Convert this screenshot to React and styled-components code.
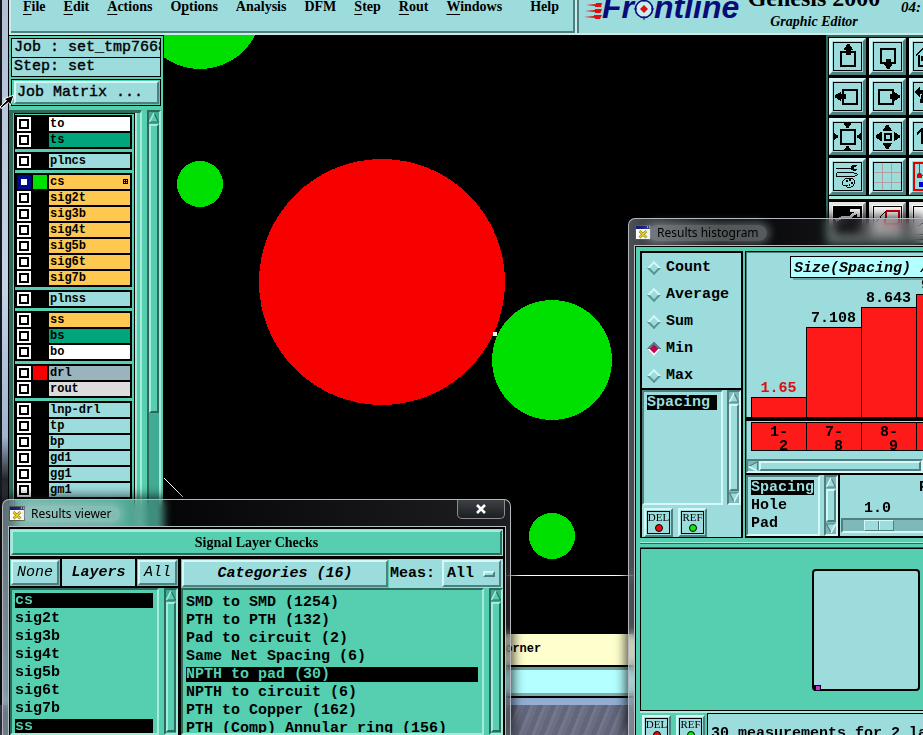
import React, { useState } from 'react';
import styled, { createGlobalStyle, css } from 'styled-components';

const MONO = '"Liberation Mono", monospace';
const SERIF = '"Liberation Serif", serif';

const teal = { base: '#55cfb0', hi: '#a4ecd9', lo: '#2d6a59', trough: '#43ab94' };
const cyan = { base: '#9cdcdc', hi: '#d4f7f7', lo: '#4f8080', trough: '#7fb8b8' };

const raised = css`
  border: 2px solid;
  border-color: ${p => p.$tone.hi} ${p => p.$tone.lo} ${p => p.$tone.lo} ${p => p.$tone.hi};
`;

const sunken = css`
  border: 2px solid;
  border-color: ${p => p.$tone.lo} ${p => p.$tone.hi} ${p => p.$tone.hi} ${p => p.$tone.lo};
`;

const GlobalStyle = createGlobalStyle`
  * { box-sizing: border-box; }
  body { margin: 0; overflow: hidden; background: #5c6278; color: #000; }
  button, input, select { margin: 0; padding: 0; border-radius: 0; color: inherit; }
  ul { margin: 0; padding: 0; list-style: none; }
  svg { display: block; }
`;

/* ---------- desktop and main window ---------- */

const Desktop = styled.div`
  position: relative;
  height: 100vh;
  overflow: hidden;
  background:
    repeating-linear-gradient(112deg, rgba(255, 255, 255, 0.06) 0 3px, transparent 3px 7px, rgba(0, 0, 0, 0.08) 7px 12px),
    linear-gradient(90deg, #4a5068, #6c7086 60%, #585e74);
`;

const Editor = styled.div`
  display: flex;
  flex-direction: column;
  height: calc(100vh - 30px);
  padding: 0 0 8px 8px;
  background:
    linear-gradient(90deg, #16181c 0 2px, transparent 2px),
    linear-gradient(180deg, #aebfd6 0, #c3d4ea 40%, #9fb4d0 62%, #22262c 68%, #93b0d4 100%);
`;

const Header = styled.header`
  display: flex;
  height: 35px;
  flex: none;
  gap: 2px;
  overflow: hidden;
  padding: 0 0 1px 2px;
  background: #cdeaea;
  border-left: 1px solid #000;
  font-family: ${SERIF};
`;

const MenuBar = styled.nav`
  display: flex;
  flex: 1;
  gap: 18px;
  height: 33px;
  padding: 0 14px 0 12px;
  background: ${cyan.base};
  border: solid ${cyan.lo};
  border-width: 0 2px 2px 0;
`;

const MenuItem = styled.button`
  height: 14px;
  border: 0;
  background: none;
  font: bold 14px/14px ${SERIF};
  ${p => p.$last && 'margin-left: auto;'}

  u {
    text-underline-offset: 3px;
    text-decoration-thickness: 1px;
    text-decoration-skip-ink: none;
  }
`;

const Brand = styled.div`
  display: flex;
  align-items: flex-end;
  width: 346px;
  height: 33px;
  padding: 0 0 0 3px;
  background: ${cyan.base};
  border-left: 2px solid ${cyan.lo};
`;

const Wordmark = styled.div`
  display: flex;
  align-items: flex-end;
  width: 165px;
  height: 33px;
  padding-bottom: 10px;
  color: #0a0a7a;
  font: italic bold 32px/32px "Liberation Sans", sans-serif;

  svg { flex: none; }
`;

const Product = styled.div`
  display: flex;
  flex-direction: column;
  align-items: center;
  gap: 4px;
  width: 134px;
  padding-bottom: 3px;
  white-space: nowrap;
`;

const ProductName = styled.strong`
  font: bold 24px/24px ${SERIF};
`;

const ProductMode = styled.em`
  font: italic bold 14px/16px ${SERIF};
`;

const Clock = styled.time`
  padding: 0 0 18px 20px;
  font: italic bold 15px/16px ${SERIF};
`;

const Body = styled.div`
  display: flex;
  flex: 1;
  min-height: 0;
  border-left: 1px solid #000;
  background: #000;
`;

const Work = styled.main`
  display: flex;
  flex: 1;
  flex-direction: column;
  min-width: 0;
`;

const Canvas = styled.svg`
  flex: 1;
  width: 100%;
  min-height: 0;
  background: #000;
  shape-rendering: crispEdges;
`;

const Hint = styled.div`
  height: 31px;
  flex: none;
  padding-left: 334px;
  background: #ffffcd;
  font: bold 12px/30px ${MONO};
  white-space: nowrap;
`;

const CommandLine = styled.input`
  height: 29px;
  flex: none;
  background: #b4ffff;
  border: solid;
  border-width: 3px 0;
  border-color: #6c9c92 transparent #78b0ac;
  outline: 2px solid #000;
  outline-offset: 0;
  margin: 2px 0 1px;
`;

/* ---------- layer sidebar ---------- */

const Sidebar = styled.aside`
  display: flex;
  flex-direction: column;
  width: 155px;
  flex: none;
  padding: 2px 2px 0 2px;
  background: ${teal.base};
  border: solid #000;
  border-width: 1px 1px 0 0;
`;

const Info = styled.div`
  height: 20px;
  padding-left: 2px;
  margin-bottom: -1px;
  overflow: hidden;
  flex: none;
  background: ${cyan.base};
  border: 1px solid #000;
  font: 15px/18px ${MONO};
  -webkit-text-stroke: 0.4px #000;
  white-space: pre;
`;

const MatrixFrame = styled.div`
  flex: none;
  height: 27px;
  margin: 3px 0 4px;
  padding: 1px 1px 1px 2px;
  border: 1px solid #000;
`;

const MatrixButton = styled.button`
  ${raised}
  width: 100%;
  height: 23px;
  padding-left: 1px;
  background: ${cyan.base};
  font: 15px/17px ${MONO};
  -webkit-text-stroke: 0.4px #000;
  text-align: left;
`;

const LayerArea = styled.div`
  display: flex;
  flex: 1;
  gap: 5px;
  min-height: 0;
  margin-left: -2px;
`;

const LayerFrame = styled.div`
  flex: 1;
  padding: 0 1px;
  overflow: hidden;
  border: solid ${teal.lo};
  border-width: 3px 0 0 4px;
  border-right: 2px solid ${teal.hi};
  margin-right: 0;
`;

const LayerList = styled.div`
  display: flex;
  flex-direction: column;
  gap: 3px;
  height: 100%;
  margin-right: 4px;
  padding: 1px 2px 0 0;
  border: 1px solid #000;
  border-width: 1px 1px 0 1px;
  box-shadow: 2px 0 0 ${teal.hi};
`;

const LayerGroup = styled.div`
  flex: none;
  padding: 1px 2px;
  background: #000;
`;

const LayerRow = styled.label`
  display: grid;
  grid-template-columns: 14px 14px 1fr;
  gap: 2px;
  height: 16px;
  padding: 1px 0;
`;

const LayerCheck = styled.input`
  appearance: none;
  width: 14px;
  height: 14px;
  border: 2px solid #fff;
  background: #fff;
  box-shadow: inset 0 0 0 2px #000;

  &:checked {
    border-color: #000b8c;
    box-shadow: inset 0 0 0 2px #000b8c;
  }
`;

const Swatch = styled.span`
  background: ${p => p.$color || '#000'};
`;

const LayerName = styled.span`
  display: flex;
  align-items: center;
  justify-content: space-between;
  padding-left: 1px;
  background: ${p => p.$color};
  font: bold 12px/14px ${MONO};
`;

/* ---------- tool buttons ---------- */

const Tools = styled.div`
  width: 97px;
  flex: none;
  overflow: hidden;
  padding-left: 1px;
  background: #000;
  border-left: 2px solid ${teal.lo};
  border-top: 2px solid ${teal.lo};
`;

const ToolGrid = styled.div`
  display: grid;
  grid-template-columns: repeat(3, 37px);
  gap: 3px;
  width: 120px;
  padding: 1px 0;
  margin-bottom: 2px;
  border-bottom: 3px solid ${teal.hi};
`;

const ToolButton = styled.button`
  width: 37px;
  height: 37px;
  padding: 1px;
  background: ${p => p.$tone.base};
  border: 3px solid;
  border-color: ${p => p.$tone.hi} ${p => p.$tone.lo} ${p => p.$tone.lo} ${p => p.$tone.hi};

  svg { border: ${p => (p.$frame ? 2 : 1)}px solid ${p => p.$frame || '#000'}; }
`;

/* ---------- scroll bars ---------- */

const Bar = styled.div`
  ${sunken}
  display: flex;
  flex: none;
  flex-direction: ${p => (p.$across ? 'row' : 'column')};
  ${p => (p.$across ? 'height: 14px;' : 'width: 14px;')}
  background: ${p => p.$tone.trough};
`;

const Thumb = styled.div`
  ${raised}
  flex: 1;
  background: ${p => p.$tone.base};
  margin: ${p => (p.$across ? '0 0 0 1px' : '1px 0')};
  ${p => p.$length && `flex: 0 0 ${p.$length}px;`}
`;

function Arrow({ tone, turn = 0 }) {
  return (
    <svg width="10" height="11" viewBox="0 0 10 11">
      <g transform={`rotate(${turn} 5 5.5)`}>
        <path d="M5 1 L9.5 10 H0.5 Z" fill={tone.base} />
        <path d="M5 1 L9.5 10 H0.5" stroke={tone.lo} strokeWidth="1.2" fill="none" />
        <path d="M5 1 L0.5 10" stroke={tone.hi} strokeWidth="1.6" fill="none" />
      </g>
    </svg>
  );
}

function ScrollBar({ tone, length, end, across }) {
  return (
    <Bar $tone={tone} $across={across}>
      <Arrow tone={tone} turn={across ? -90 : 0} />
      <Thumb $tone={tone} $length={length} $across={across} />
      {end && <Arrow tone={tone} turn={180} />}
    </Bar>
  );
}

/* ---------- glass windows ---------- */

const Glass = styled.section`
  position: absolute;
  display: flex;
  flex-direction: column;
  left: ${p => p.$left}px;
  top: ${p => p.$top}px;
  bottom: 0;
  ${p => (p.$width ? `width: ${p.$width}px;` : 'right: 0;')}
  padding: 0 5px;
  border: 1px solid #b4b8bc;
  border-width: 1px 1px 0;
  border-radius: 7px 7px 0 0;
  ${p => !p.$width && 'border-right: 0; padding-right: 0; border-top-right-radius: 0;'}
  background: linear-gradient(90deg, rgba(150, 160, 170, 0.5), rgba(20, 24, 30, 0.2) 30%, rgba(60, 60, 64, 0.5));
  backdrop-filter: blur(5px);
  box-shadow: 0 0 12px 2px rgba(0, 0, 0, 0.75);
`;

const TitleBar = styled.div`
  display: flex;
  align-items: center;
  gap: 6px;
  height: 27px;
  flex: none;
  padding-left: 1px;
  font: 12px/16px "Noto Sans", sans-serif;
`;

const Title = styled.h2`
  margin: 0 0 0 -8px;
  padding: 0 8px;
  border-radius: 8px;
  background: rgba(200, 210, 214, 0.4);
  box-shadow: 0 0 8px 3px rgba(200, 210, 214, 0.4);
  font: inherit;
`;

const CloseButton = styled.button`
  align-self: flex-start;
  width: 48px;
  height: 19px;
  margin-left: auto;
  border: 1px solid #8b8e90;
  border-top: 0;
  border-radius: 0 0 5px 5px;
  background: linear-gradient(#3c4044, #1c1f22);

  svg { margin: 0 auto; }
`;

const Client = styled.div`
  display: flex;
  flex: 1;
  flex-direction: column;
  min-height: 0;
  overflow: hidden;
  margin-left: ${p => (p.$pad ? 1 : 1)}px;
  padding: ${p => (p.$pad ? '4px 0 0 4px' : '1px 1px 0 0')};
  background: ${p => p.$bg};
  border: solid #000;
  border-width: 1px ${p => (p.$pad ? 0 : 1)}px 0 1px;
  outline: 1px solid #b4c0c4;
`;

/* ---------- results viewer ---------- */

const Banner = styled.div`
  height: 27px;
  flex: none;
  margin-bottom: 3px;
  border: 1px solid ${cyan.base};
  background: ${teal.base};
`;

const BannerTitle = styled.h3`
  ${raised}
  height: 25px;
  margin: 0;
  font: bold 14px/22px ${SERIF};
  text-align: center;
`;

const Columns = styled.div`
  display: flex;
  flex: 1;
  gap: 3px;
  min-height: 0;
`;

const Column = styled.div`
  display: flex;
  flex-direction: column;
  ${p => (p.$width ? `width: ${p.$width}px; flex: none;` : 'flex: 1; min-width: 0;')}
`;

const ColumnHead = styled.div`
  display: flex;
  gap: ${p => p.$gap || 0}px;
  height: 29px;
  flex: none;
  padding-bottom: ${p => (p.$gap ? 2 : 0)}px;
`;

const PushCell = styled.div`
  flex: ${p => (p.$grow ? '1' : 'none')};
  padding: 1px;
  background: ${teal.base};
`;

const Push = styled.button`
  ${raised}
  width: 100%;
  height: 100%;
  padding: 0 4px;
  background: ${cyan.base};
  font: italic ${p => (p.$bold ? 'bold' : 'normal')} 15px/17px ${MONO};
`;

const HeadLabel = styled.div`
  flex: 1;
  background: ${cyan.base};
  font: italic bold 15px/28px ${MONO};
  text-align: center;
`;

const Measure = styled.label`
  display: flex;
  align-items: center;
  gap: 7px;
  width: 114px;
  padding: 0 2px 0 1px;
  background: ${cyan.base};
  font: bold 15px/17px ${MONO};
`;

const OptionWrap = styled.span`
  ${raised}
  display: flex;
  align-items: center;
  flex: 1;
  height: 27px;
  padding-right: 4px;
`;

const OptionMenu = styled.select`
  appearance: none;
  flex: 1;
  min-width: 0;
  border: 0;
  padding-left: 3px;
  background: none;
  font: inherit;
`;

const OptionMark = styled.i`
  ${raised}
  width: 12px;
  height: 6px;
`;

const ListRow = styled.div`
  display: flex;
  flex: 1;
  gap: ${p => (p.$tight ? 4 : 5)}px;
  min-height: 0;
  background: ${p => p.$tone.base};
`;

const ListBox = styled.ul`
  ${sunken}
  flex: 1;
  overflow: hidden;
  padding: ${p => (p.$low ? 5 : 3)}px 4px 0 3px;
`;

const ListItem = styled.li`
  height: 15px;
  margin-bottom: 3px;
  font: bold 15px/15px ${MONO};
  white-space: nowrap;
  ${p => p.$on && css`
    background: #000;
    color: ${p.$tone.base};
  `}
`;

/* ---------- results histogram ---------- */

const Upper = styled.div`
  display: flex;
  flex: none;
  height: 287px;
  gap: 2px;
`;

const SidePanel = styled.div`
  display: flex;
  flex-direction: column;
  width: 103px;
  flex: none;
  border: 2px solid #000;
  border-bottom-width: 1px;
  background: ${cyan.base};
`;

const RadioSet = styled.fieldset`
  height: 137px;
  flex: none;
  margin: 0;
  padding: 1px 0 0 4px;
  border: 0;
  border-bottom: 2px solid #000;
`;

const RadioRow = styled.label`
  display: flex;
  align-items: center;
  gap: 4px;
  height: 27px;
  font: bold 15px/17px ${MONO};
`;

const Diamond = styled.input`
  appearance: none;
  width: 10px;
  height: 10px;
  margin: 3px;
  transform: rotate(45deg);
  border: 2px solid;
  border-color: ${cyan.hi} #5a9292 #5a9292 ${cyan.hi};

  &:checked {
    background: #c4004c;
    border-color: ${cyan.lo} #f2ffff #f2ffff ${cyan.lo};
  }
`;

const SideList = styled.div`
  display: flex;
  height: 115px;
  flex: none;
`;

const Chips = styled.div`
  display: flex;
  gap: ${p => p.$gap}px;
  padding: ${p => p.$pad};
`;

const Chip = styled.button`
  ${raised}
  flex: none;
  width: 29px;
  height: 29px;
  background: ${cyan.base};
  padding: 1px;

  span {
    display: flex;
    flex-direction: column;
    align-items: center;
    gap: 1px;
    height: 23px;
    border: 1px solid #000;
    font: 11px/11px ${SERIF};
  }

  i {
    width: 8px;
    height: 8px;
    border: 1px solid #000;
    border-radius: 50%;
    background: ${p => p.$dot};
  }
`;

const ChartPanel = styled.div`
  position: relative;
  display: flex;
  flex: 1;
  flex-direction: column;
  min-width: 0;
  overflow: hidden;
  background: ${cyan.base};
  border: solid #000;
  border-width: 1px 0 2px 1px;
  box-shadow: inset 1px 1px 0 ${cyan.lo};
`;

const ChartTitle = styled.h3`
  position: absolute;
  top: 4px;
  left: 44px;
  margin: 0;
  height: 22px;
  padding: 0 3px;
  background: #b4ffff;
  border: 1px solid #000;
  box-shadow: 3px 2px 0 #6fa2a2;
  font: italic bold 15px/24px ${MONO};
  white-space: nowrap;
`;

const Bars = styled.div`
  display: flex;
  align-items: flex-end;
  height: 165px;
  flex: none;
  padding-left: 5px;
`;

const BarColumn = styled.div`
  width: 55px;
  flex: none;
  color: ${p => p.$ink};
  font: bold 15px/17px ${MONO};
  text-align: center;
`;

const BarFill = styled.div`
  width: 56px;
  border: 1px solid #000;
  border-bottom: 0;
  background: #ff1a1a;
`;

const Bins = styled.div`
  display: flex;
  flex: none;
  height: 42px;
  border-top: 4px solid #000;
  padding: 1px 0 8px 5px;
`;

const Bin = styled.div`
  width: 56px;
  flex: none;
  height: 29px;
  margin-right: -1px;
  overflow: hidden;
  padding-top: 3px;
  border: 1px solid #000;
  background: #ff1a1a;
  font: bold 15px/14px ${MONO};
  text-align: center;
  white-space: pre;
`;

const ControlRow = styled.div`
  display: flex;
  flex: 1;
  min-height: 0;
  border-top: 2px solid #000;
`;

const FilterList = styled.div`
  display: flex;
  width: 92px;
  flex: none;
`;

const ScalePanel = styled.div`
  display: flex;
  flex-direction: column;
  flex: none;
  width: 246px;
  padding: 4px 2px 0 1px;
  border-left: 2px solid #000;
  font: bold 15px/17px ${MONO};
`;

const ScaleLabel = styled.label`
  padding-left: 78px;
  height: 21px;
`;

const ScaleValue = styled.output`
  padding-left: 23px;
  height: 18px;
`;

const Scale = styled.input`
  appearance: none;
  width: 240px;
  height: 15px;
  border: 2px solid;
  border-color: ${cyan.lo} ${cyan.hi} ${cyan.hi} ${cyan.lo};
  background: ${cyan.trough};

  &::-webkit-slider-thumb {
    appearance: none;
    width: 30px;
    height: 11px;
    border: 1px solid;
    border-color: ${cyan.hi} ${cyan.lo} ${cyan.lo} ${cyan.hi};
    background: linear-gradient(90deg, transparent 13px, ${cyan.lo} 13px 14px, ${cyan.hi} 14px 15px, transparent 15px) ${cyan.base};
  }
`;

const Sash = styled.div`
  height: 10px;
  flex: none;
  border-bottom: 1px solid ${teal.lo};
  background: linear-gradient(transparent 4px, ${teal.hi} 4px 5px, ${teal.lo} 5px 6px, transparent 6px);
`;

const BoardPanel = styled.div`
  display: flex;
  justify-content: flex-end;
  align-items: flex-start;
  flex: 1;
  min-height: 0;
  padding: 20px 3px 0 0;
  border: 1px solid #000;
  border-right: 0;
`;

const Footer = styled.div`
  display: flex;
  gap: 2px;
  height: 24px;
  flex: none;
  overflow: hidden;
  border-top: 2px solid ${teal.hi};
`;

const Message = styled.p`
  flex: 1;
  height: 40px;
  margin: 0;
  padding: 10px 0 0 3px;
  overflow: hidden;
  background: ${cyan.base};
  border: solid #000;
  border-width: 1px 0 0 1px;
  font: bold 15px/20px ${MONO};
  white-space: nowrap;
`;

const Pointer = styled.svg`
  position: absolute;
  left: 0;
  top: 94px;
`;

/* ---------- data ---------- */

const MENUS = [
  ['', 'F', 'ile'], ['', 'E', 'dit'], ['', 'A', 'ctions'], ['O', 'p', 'tions'], ['Analysis', '', ''],
  ['DFM', '', ''], ['', 'S', 'tep'], ['', 'R', 'out'], ['', 'W', 'indows'], ['Help', '', ''],
];

const SIGNAL = '#ffc850';
const MASK = '#00a57c';

const LAYERS = [
  [['to', '#fff'], ['ts', MASK]],
  [['plncs', cyan.base]],
  [['cs', SIGNAL, '#00e000'], ['sig2t', SIGNAL], ['sig3b', SIGNAL], ['sig4t', SIGNAL], ['sig5b', SIGNAL], ['sig6t', SIGNAL], ['sig7b', SIGNAL]],
  [['plnss', cyan.base]],
  [['ss', SIGNAL], ['bs', MASK], ['bo', '#fff']],
  [['drl', '#9ab4be', '#f80000'], ['rout', '#dcdcdc']],
  [['lnp-drl', cyan.base], ['tp', cyan.base], ['bp', cyan.base], ['gd1', cyan.base], ['gg1', cyan.base], ['gm1', cyan.base]],
];

const CHECK_LAYERS = ['cs', 'sig2t', 'sig3b', 'sig4t', 'sig5b', 'sig6t', 'sig7b', 'ss'];

const CATEGORIES = [
  'SMD to SMD (1254)', 'PTH to PTH (132)', 'Pad to circuit (2)', 'Same Net Spacing (6)',
  'NPTH to pad (30)', 'NPTH to circuit (6)', 'PTH to Copper (162)', 'PTH (Comp) Annular ring (156)',
];

const BARS = [
  { value: '1.65', height: 20, bin: '1-\n 2', ink: '#d81010' },
  { value: '7.108', height: 90, bin: '7-\n 8' },
  { value: '8.643', height: 110, bin: '8-\n 9' },
  { value: '9.252', height: 123, bin: '9-\n 10' },
];

/* ---------- icons ---------- */

const HEAD = {
  up: 'M-5 3 L-1 -3 H1 L5 3 Z',
  down: 'M-5 -3 L-1 3 H1 L5 -3 Z',
  left: 'M3 -5 L-3 -1 V1 L3 5 Z',
  right: 'M-3 -5 L3 -1 V1 L-3 5 Z',
};

const Head = ({ dir, x, y }) => <path d={HEAD[dir]} transform={`translate(${x} ${y})`} />;
const Box = ({ x, y, s }) => <rect x={x} y={y} width={s} height={s} fill="none" stroke="#000" strokeWidth="2" />;

const TOOLS = [
  ['Pan up', <><Box x={7} y={9} s={15} /><Head dir="up" x={15} y={4} /><rect x="12" y="6" width="6" height="6" /></>],
  ['Pan down', <><Box x={7} y={6} s={15} /><rect x="12" y="17" width="6" height="6" /><Head dir="down" x={15} y={24} /></>],
  ['Home view', <path d="M2 13 L10 5 L20 5 L25 13 M5 12 V24 H22 V12 M8 14 H12 V18 H8 Z M15 24 V16 H19 V24" fill="none" stroke="#000" strokeWidth="2" />],
  ['Pan left', <><Box x={9} y={7} s={15} /><Head dir="left" x={4} y={14} /><rect x="6" y="11" width="6" height="6" /></>],
  ['Pan right', <><Box x={5} y={7} s={15} /><rect x="17" y="11" width="6" height="6" /><Head dir="right" x={24} y={14} /></>],
  ['Previous view', <path d="M1 9 L6 4 V8 H20 V11 H6 V14 Z M8 11 L11 14 V20 H6" fill="#000" stroke="#000" />],
  ['Zoom in', <><Box x={7} y={7} s={15} /><Head dir="down" x={14} y={2} /><Head dir="up" x={14} y={27} /><Head dir="right" x={1} y={14} /><Head dir="left" x={27} y={14} /></>],
  ['Zoom out', <><Box x={11} y={11} s={7} /><Head dir="up" x={14} y={5} /><Head dir="down" x={14} y={24} /><Head dir="left" x={5} y={14} /><Head dir="right" x={24} y={14} /></>],
  ['Zoom area', <path d="M3 12 L8 6 L13 12 M8 7 V22" fill="none" stroke="#000" strokeWidth="2" />],
  ['Setup', (
    <>
      <path d="M2 5 H17 C18 2 21 1 25 3 L21 4 V6 L25 7 C21 9 18 8 17 6 H2 Z" />
      <path d="M3 10 H20 L25 12 L20 14 H3 Z" fill="none" stroke="#000" />
      <path d="M9 21 C8 17 13 15 18 16 C23 17 22 23 18 25 C14 27 12 25 14 23 C11 25 9 23 9 21 Z" fill="none" stroke="#000" />
      <path d="M12 19 h2 M16 18 h2 M18 21 h2 M16 23 h1" stroke="#000" strokeWidth="2" />
    </>
  )],
  ['Grid', <path d="M9 0 V28 M18 0 V28 M0 10 H28 M0 20 H28" fill="none" stroke="#b49c9c" />],
  ['Snap', (
    <>
      <path d="M5 0 V13 H28" fill="none" stroke="#e00000" />
      <circle cx="5" cy="13" r="3" fill="#e00000" />
      <circle cx="7" cy="23" r="3" fill="#0000e0" />
    </>
  ), '#e00000'],
];

const WHITE = { base: '#ffffff', hi: '#e8e8e8', lo: '#8c8c8c' };

const EDIT_TOOLS = [
  ['Select feature', <><rect width="28" height="28" /><path d="M2 14 L8 11 H16 L25 4 M17 4 H25 V10" fill="none" stroke="#fff" strokeWidth="3" /></>],
  ['Select polygon', <><path d="M13 4 H26 V18 H11 Z" fill="none" stroke="#d00010" strokeWidth="2" /><path d="M2 16 L12 4" stroke="#000" /></>],
  ['Select net', <path d="M4 20 L24 6" stroke="#000" />],
];

function ToolIcon({ name, art, tone, frame }) {
  return (
    <ToolButton type="button" $tone={tone} $frame={frame} aria-label={name}>
      <svg width="29" height="29" viewBox="0 0 28 28" shapeRendering="crispEdges">{art}</svg>
    </ToolButton>
  );
}

const XIcon = () => (
  <svg width="16" height="15" viewBox="0 0 16 15">
    <rect x="0.5" y="0.5" width="15" height="14" fill="#fff" stroke="#555" />
    <rect x="1" y="1" width="14" height="3" fill="#151d78" />
    <path d="M12 2 h1 M14 2 h1" stroke="#fff" />
    <path d="M4.5 6 L11.5 12.5 M11.5 6 L4.5 12.5" stroke="#807000" strokeWidth="2.6" />
    <path d="M4.5 6 L11.5 12.5 M11.5 6 L4.5 12.5" stroke="#e8d420" strokeWidth="1.6" />
  </svg>
);

function FrontlineLogo() {
  return (
    <Wordmark>
      <svg width="20" height="20" viewBox="0 0 20 20">
        {[0, 6, 12].map(y => (
          <path
            key={y}
            fill="#e01010"
            d={`M${4 - y / 6} ${y + 2} L${14 - y / 6} ${y + 1} V${y} H20 L${19 - y / 12} ${y + 4} H13 V${y + 3} Z`}
          />
        ))}
      </svg>
      Fr
      <svg width="20" height="26" viewBox="0 0 20 26">
        <circle cx="10" cy="12" r="8.5" fill="#c8eef0" stroke="#0a0a7a" strokeWidth="1.6" />
        <path d="M10 1 V5 M10 19 V23 M0 12 H3 M17 12 H20" stroke="#0a0a7a" />
        <path d="M10 8 L14 12 L10 16 L6 12 Z" fill="#e01010" />
      </svg>
      ntline
    </Wordmark>
  );
}

/* ---------- parts ---------- */

function LayerPanel() {
  return (
    <Sidebar>
      <Info>Job : set_tmp7668</Info>
      <Info>Step: set</Info>
      <MatrixFrame>
        <MatrixButton type="button" $tone={cyan}>Job Matrix ...</MatrixButton>
      </MatrixFrame>
      <LayerArea>
        <LayerFrame>
          <LayerList>
            {LAYERS.map(group => (
              <LayerGroup key={group[0][0]}>
                {group.map(([name, color, swatch]) => (
                  <LayerRow key={name}>
                    <LayerCheck type="checkbox" defaultChecked={name === 'cs'} />
                    <Swatch $color={swatch} />
                    <LayerName $color={color}>
                      {name}
                      {name === 'cs' && (
                        <svg width="7" height="6" viewBox="0 0 7 6" shapeRendering="crispEdges">
                          <path d="M0 0.5 H5 M0 2.5 H5 M0 4.5 H5 M0.5 0 V5 M2.5 0 V5 M4.5 0 V5" stroke="#000" />
                        </svg>
                      )}
                    </LayerName>
                  </LayerRow>
                ))}
              </LayerGroup>
            ))}
          </LayerList>
        </LayerFrame>
        <ScrollBar tone={teal} length={289} />
      </LayerArea>
    </Sidebar>
  );
}

function SelectList({ items, initial, tone, low }) {
  const [picked, setPicked] = useState(initial);

  return (
    <ListBox $tone={tone} $low={low} role="listbox">
      {items.map(item => (
        <ListItem
          key={item}
          role="option"
          aria-selected={picked.includes(item)}
          $on={picked.includes(item)}
          $tone={tone}
          onClick={() => setPicked([item])}
        >
          {item}
        </ListItem>
      ))}
    </ListBox>
  );
}

function ResultsViewer() {
  return (
    <Glass $left={2} $top={499} $width={509}>
      <TitleBar>
        <XIcon />
        <Title>Results viewer</Title>
        <CloseButton type="button" aria-label="Close">
          <svg width="12" height="10" viewBox="0 0 12 10">
            <path d="M2 1 L10 9 M10 1 L2 9" stroke="#fff" strokeWidth="2.6" />
          </svg>
        </CloseButton>
      </TitleBar>
      <Client $bg="#000">
        <Banner><BannerTitle $tone={teal}>Signal Layer Checks</BannerTitle></Banner>
        <Columns>
          <Column $width={168}>
            <ColumnHead $gap={2}>
              <PushCell><Push type="button" $tone={cyan}>None</Push></PushCell>
              <HeadLabel>Layers</HeadLabel>
              <PushCell><Push type="button" $tone={cyan}>All</Push></PushCell>
            </ColumnHead>
            <ListRow $tone={teal}>
              <SelectList items={CHECK_LAYERS} initial={['cs', 'ss']} tone={teal} />
              <ScrollBar tone={teal} />
            </ListRow>
          </Column>
          <Column>
            <ColumnHead>
              <PushCell $grow><Push type="button" $tone={cyan} $bold>Categories (16)</Push></PushCell>
              <Measure>
                Meas:
                <OptionWrap $tone={cyan}>
                  <OptionMenu defaultValue="All"><option>All</option></OptionMenu>
                  <OptionMark $tone={cyan} />
                </OptionWrap>
              </Measure>
            </ColumnHead>
            <ListRow $tone={teal}>
              <SelectList items={CATEGORIES} initial={['NPTH to pad (30)']} tone={teal} low />
              <ScrollBar tone={teal} />
            </ListRow>
          </Column>
        </Columns>
      </Client>
    </Glass>
  );
}

function ChipButton({ children, dot }) {
  return (
    <Chip type="button" $tone={cyan} $dot={dot}>
      <span>{children}<i /></span>
    </Chip>
  );
}

function ResultsHistogram() {
  const [stat, setStat] = useState('Min');
  const [scale, setScale] = useState(1);

  return (
    <Glass $left={628} $top={218}>
      <TitleBar>
        <XIcon />
        <Title>Results histogram</Title>
      </TitleBar>
      <Client $bg={teal.base} $pad>
        <Upper>
          <SidePanel>
            <RadioSet aria-label="Statistic">
              {['Count', 'Average', 'Sum', 'Min', 'Max'].map(name => (
                <RadioRow key={name}>
                  <Diamond type="radio" name="stat" checked={stat === name} onChange={() => setStat(name)} />
                  {name}
                </RadioRow>
              ))}
            </RadioSet>
            <SideList>
              <ListRow $tone={cyan} $tight>
                <SelectList items={['Spacing']} initial={['Spacing']} tone={cyan} />
                <ScrollBar tone={cyan} end />
              </ListRow>
            </SideList>
            <Chips $gap={5} $pad="3px 0 0 2px">
              <ChipButton dot="#e80c0c">DEL</ChipButton>
              <ChipButton dot="#10e810">REF</ChipButton>
            </Chips>
          </SidePanel>
          <ChartPanel>
            <ChartTitle>Size(Spacing) / Count</ChartTitle>
            <Bars>
              {BARS.map(bar => (
                <BarColumn key={bar.value} $ink={bar.ink}>
                  {bar.value}
                  <BarFill style={{ height: bar.height }} />
                </BarColumn>
              ))}
            </Bars>
            <Bins>
              {BARS.map(bar => <Bin key={bar.bin}>{bar.bin}</Bin>)}
            </Bins>
            <ScrollBar tone={cyan} across />
            <ControlRow>
              <FilterList>
                <ListRow $tone={cyan} $tight>
                  <SelectList items={['Spacing', 'Hole', 'Pad']} initial={['Spacing']} tone={cyan} />
                  <ScrollBar tone={cyan} end />
                </ListRow>
              </FilterList>
              <ScalePanel>
                <ScaleLabel htmlFor="scale">P</ScaleLabel>
                <ScaleValue htmlFor="scale">{scale.toFixed(1)}</ScaleValue>
                <Scale
                  id="scale"
                  type="range"
                  min="0"
                  max="10"
                  value={scale}
                  onChange={e => setScale(Number(e.target.value))}
                />
              </ScalePanel>
            </ControlRow>
          </ChartPanel>
        </Upper>
        <Sash />
        <BoardPanel>
          <svg width="108" height="122" viewBox="0 0 108 122">
            <rect x="1" y="1" width="106" height="120" rx="3" fill={cyan.base} stroke="#000" strokeWidth="2" />
            <rect x="2" y="116" width="7" height="6" fill="#000" />
            <rect x="4" y="117" width="4" height="4" fill="#d030d8" />
          </svg>
        </BoardPanel>
        <Footer>
          <Chips $gap={5} $pad="2px 0 0 2px">
            <ChipButton dot="#e80c0c">DEL</ChipButton>
            <ChipButton dot="#10e810">REF</ChipButton>
          </Chips>
          <Message>30 measurements for 2 layers</Message>
        </Footer>
      </Client>
    </Glass>
  );
}

function App() {
  return (
    <Desktop>
      <GlobalStyle />
      <Editor>
        <Header>
          <MenuBar>
            {MENUS.map(([before, key, after]) => (
              <MenuItem key={before + key + after} type="button" $last={before === 'Help'}>
                {before}<u>{key}</u>{after}
              </MenuItem>
            ))}
          </MenuBar>
          <Brand>
            <FrontlineLogo />
            <Product>
              <ProductName>Genesis 2000</ProductName>
              <ProductMode>Graphic Editor</ProductMode>
            </Product>
            <Clock>04:</Clock>
          </Brand>
        </Header>
        <Body>
          <LayerPanel />
          <Work>
            <Canvas>
              <g fill="#00e000">
                <circle cx="36" cy="-28" r="62" />
                <circle cx="36" cy="149" r="23" />
                <circle cx="388" cy="501" r="23" />
              </g>
              <circle cx="218" cy="247" r="123" fill="#f80000" />
              <circle cx="388" cy="325" r="60" fill="#00e000" />
              <rect x="329" y="297" width="4" height="4" fill="#fff" />
              <path d="M0 443 L19 462 M0 540.5 H800" stroke="#fff" />
            </Canvas>
            <Hint>corner</Hint>
            <CommandLine aria-label="Command" />
          </Work>
          <Tools>
            <ToolGrid>
              {TOOLS.map(([name, art, frame]) => (
                <ToolIcon key={name} name={name} art={art} frame={frame} tone={cyan} />
              ))}
            </ToolGrid>
            <ToolGrid>
              {EDIT_TOOLS.map(([name, art]) => (
                <ToolIcon key={name} name={name} art={art} tone={WHITE} />
              ))}
            </ToolGrid>
          </Tools>
        </Body>
      </Editor>
      <ResultsViewer />
      <ResultsHistogram />
      <Pointer width="15" height="16" viewBox="0 0 15 16">
        <path d="M14 1 L10.5 11 L8.5 8.5 L1 14.5 L0 13 L6.5 6.5 L3.5 5 Z" fill="#000" stroke="#fff" />
      </Pointer>
    </Desktop>
  );
}

export default App;
